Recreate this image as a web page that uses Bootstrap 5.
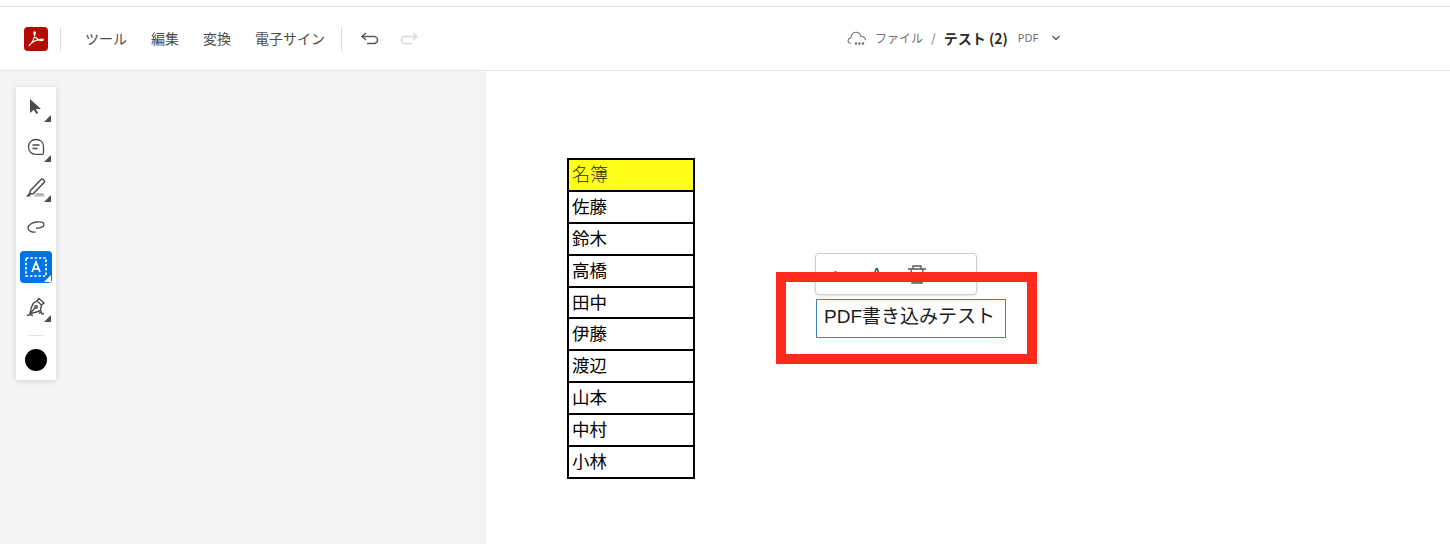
<!DOCTYPE html>
<html lang="ja">
<head>
<meta charset="utf-8">
<title>PDF</title>
<link rel="stylesheet" href="https://cdn.jsdelivr.net/npm/bootstrap@5.3.0/dist/css/bootstrap.min.css">
<style>
html,body{height:100%;overflow:hidden;background:#fff}
body{font-family:"Noto Sans CJK JP","Noto Sans",sans-serif;color:#2c2c2c}
.shell{height:544px;padding-top:6px}
.topbar{height:65px;border-top:1px solid #e3e3e3;border-bottom:1px solid #e8e8e8;background:#fff;padding-left:24px;position:relative}
.logo-box{width:24px;height:24px;border-radius:4px;background:#b30b00;flex:none}
.vsep{width:1px;height:24px;background:#dcdcdc;flex:none}
.vsep-first{margin-left:12px}
.menu-item{font-size:14px;line-height:20px;color:#4b4b4b;white-space:nowrap}
.menu-wrap{gap:24px;margin-left:24px;margin-right:16px;margin-bottom:2px}
.undo-wrap{gap:19px;margin-left:18px}
.crumb{position:absolute;left:847px;top:19px;height:24px;white-space:nowrap}
.crumb-light{font-size:12px;color:#6e6e6e}
.crumb-file{margin-left:8px}
.crumb-name{font-size:14px;font-weight:700;color:#2c2c2c;margin-left:8px}
.crumb-ext{font-size:11px;color:#6e6e6e;font-family:"Noto Sans",sans-serif;margin-left:10px}
.crumb-arrow{margin-left:13px}
.workarea{height:473px}
.side-pane{width:486px;background:#f4f4f4;flex:none;padding:16px 0 0 16px}
.tool-rail{width:40px;height:293px;background:#fff;box-shadow:0 1px 6px rgba(0,0,0,.14);padding-top:4px}
.tool-btn{width:32px;height:32px;margin:0 auto 8px;border-radius:4px;position:relative;display:flex;align-items:center;justify-content:center}
.tool-on{background:#0073e6}
.corner{position:absolute;right:1px;bottom:1px;width:0;height:0;border-left:7px solid transparent;border-bottom:7px solid #4b4b4b}
.tool-on .corner{border-bottom-color:#fff}
.rail-line{width:16px;height:1px;background:#e1e1e1;margin:12px auto 13px}
.black-dot{width:22px;height:22px;border-radius:50%;background:#000;margin:0 auto}
.doc-page{flex:1;background:#fff;position:relative}
.name-grid{position:absolute;left:81px;top:87px;width:128px;border:2px solid #000;background:#fff;font-family:"Liberation Sans","Noto Sans CJK JP",sans-serif;font-size:17.500px;color:#000}
.name-row{height:31.9px;line-height:30px;padding-left:3px;border-bottom:2px solid #000}
.name-row:last-child{border-bottom:0;height:30px}
.name-head{background:#ffff1a;color:#2a2a00;font-size:18px;font-weight:300}
.ink-pop{position:absolute;left:329px;top:182px;width:162px;height:42px;background:#fff;border:1px solid #cfcfcf;border-radius:4px;box-shadow:0 1px 2px rgba(0,0,0,.12)}
.ink-dot{position:absolute;left:18px;top:17px;width:3px;height:3px;background:#555;border-radius:50%}
.ink-a{position:absolute;left:55px;top:11px;font-size:17px;line-height:20px;color:#444;font-family:"Liberation Sans",sans-serif}
.ink-bin{position:absolute;left:91px;top:10px}
.text-field{position:absolute;left:330px;top:228px;width:190px;height:39px;border:1px solid #3a85c9;background:#fff;padding-left:7px;font-size:19px;line-height:33px;color:#1c1c1c;font-family:"Liberation Sans","Noto Sans CJK JP",sans-serif;white-space:nowrap}
.red-frame{position:absolute;left:290px;top:201px;width:261px;height:92px;border:10px solid #ff2a1c;pointer-events:none}
</style>
</head>
<body>
<div class="shell">
  <header class="topbar d-flex align-items-center">
    <div class="logo-box d-flex align-items-center justify-content-center">
      <svg width="20" height="20" viewBox="0 0 20 20" fill="none" stroke="#fff" stroke-width="1.200"><path d="M3 16.500C6 15 9 8 9.300 3.800c.1-1.300-1.500-1.300-1.400.2C8 8 12.500 12.300 16.500 11.500c1.300-.3 1-1.400-.4-1.400C12 10 6.500 12.500 3.600 15.800c-.8.900-.3 1.200-.6.700"/></svg>
    </div>
    <div class="vsep vsep-first"></div>
    <nav class="d-flex align-items-center menu-wrap">
      <span class="menu-item">ツール</span>
      <span class="menu-item">編集</span>
      <span class="menu-item">変換</span>
      <span class="menu-item">電子サイン</span>
    </nav>
    <div class="vsep"></div>
    <div class="d-flex align-items-center undo-wrap">
      <svg width="20" height="16" viewBox="0 0 20 16" fill="none" stroke="#5a5a5a" stroke-width="1.500"><path d="M6 2 2 5.500 6 9"/><path d="M2 5.500h12a3.500 3.500 0 0 1 0 7H7"/></svg>
      <svg width="20" height="16" viewBox="0 0 20 16" fill="none" stroke="#d8d8d8" stroke-width="1.500"><path d="M14 2l4 3.500L14 9"/><path d="M18 5.500H6a3.500 3.500 0 0 0 0 7h7"/></svg>
    </div>
    <div class="crumb d-flex align-items-center">
      <svg width="20" height="16" viewBox="0 0 20 16" fill="none" stroke="#6e6e6e" stroke-width="1.100"><path d="M4 13.500C1.500 13.500.8 11.500 1.200 10c.3-1.300 1.500-2 2.600-2C4.500 4 7 2 9.500 2.300 12 2.600 13.500 4.500 14 6.500c2.500 0 4.500 1.500 4.500 3.800"/><circle cx="9" cy="13.500" r=".7" fill="#6e6e6e"/><circle cx="12.500" cy="13.500" r=".7" fill="#6e6e6e"/><circle cx="16" cy="13.500" r=".7" fill="#6e6e6e"/></svg>
      <span class="crumb-light crumb-file">ファイル</span>
      <span class="crumb-light ms-2">/</span>
      <span class="crumb-name">テスト (2)</span>
      <span class="crumb-ext">PDF</span>
      <svg class="crumb-arrow" width="10" height="8" viewBox="0 0 10 8" fill="none" stroke="#5a5a5a" stroke-width="1.400"><path d="M1.500 2 5 5.500 8.500 2"/></svg>
    </div>
  </header>
  <main class="workarea d-flex">
    <aside class="side-pane">
      <div class="tool-rail">
        <div class="tool-btn">
          <svg width="18" height="18" viewBox="0 0 18 18"><path d="M3 1v14l3.800-3.200 2.600 4.200 1.800-1-2.400-4H14z" fill="#4b4b4b"/></svg><span class="corner"></span>
        </div>
        <div class="tool-btn">
          <svg width="20" height="20" viewBox="0 0 20 20" fill="none" stroke="#4b4b4b" stroke-width="1.300"><path d="M10 2.500c4.500 0 7.500 2.800 7.500 7v6.500c0 .8-.5 1.300-1.300 1.300H10c-4.500 0-7.500-3-7.500-7.300S5.500 2.500 10 2.500z"/><path d="M6.500 8h7M6.500 11.500h5" stroke-width="1.500"/></svg><span class="corner"></span>
        </div>
        <div class="tool-btn">
          <svg width="24" height="22" viewBox="0 0 24 22" fill="none" stroke="#4b4b4b" stroke-width="1.500"><path d="M6.500 14.500 17 3.500c.7-.7 1.500-.7 2.200 0l.8.800c.7.700.7 1.500 0 2.200L9.500 17.500l-4 .5z"/><path d="M9 20.500h12l-2-3.500h-6z" fill="#b5b5b5" stroke="none"/><path d="M2 20.500 4.500 17.500l2.500 3z" fill="#4b4b4b" stroke="none"/></svg><span class="corner"></span>
        </div>
        <div class="tool-btn">
          <svg width="20" height="14" viewBox="0 0 20 14" fill="none" stroke="#4b4b4b" stroke-width="1.300"><path d="M10 8c3.500.5 8-.8 8-3.500C18 2 14.500 1.500 10.500 2 6 2.700 2 5 2 8c0 3 4 4.500 7.500 4"/></svg>
        </div>
        <div class="tool-btn tool-on">
          <svg width="24" height="22" viewBox="0 0 24 22" fill="none" stroke="#fff"><rect x="2" y="2" width="20" height="18" stroke-width="1.700" stroke-dasharray="2.500 1.800"/><path d="M8 16 12 6l4 10M9.500 13h5" stroke-width="1.700"/></svg><span class="corner"></span>
        </div>
        <div class="tool-btn">
          <svg width="24" height="22" viewBox="0 0 24 22" fill="none" stroke="#4b4b4b" stroke-width="1.400"><path d="M15 2.500 20 7l-2.500 2-1 5.500c-3 1.500-7 2.500-10.500 3 .5-3.500 1.500-7.500 3.500-10.500L13 5z"/><path d="M13 5l4.500 4"/><path d="M6 17.500 11 12"/><circle cx="12" cy="11" r="1.300"/><path d="M3 19.500c2-1 4-1 6 0M15 17.500l2-1.500 1 2 2-.5" stroke-width="1.500"/></svg><span class="corner"></span>
        </div>
        <div class="rail-line"></div>
        <div class="black-dot"></div>
      </div>
    </aside>
    <section class="doc-page">
      <div class="name-grid">
        <div class="name-row name-head">名簿</div>
        <div class="name-row">佐藤</div>
        <div class="name-row">鈴木</div>
        <div class="name-row">高橋</div>
        <div class="name-row">田中</div>
        <div class="name-row">伊藤</div>
        <div class="name-row">渡辺</div>
        <div class="name-row">山本</div>
        <div class="name-row">中村</div>
        <div class="name-row">小林</div>
      </div>
      <div class="ink-pop">
        <span class="ink-dot"></span>
        <span class="ink-a">A</span>
        <svg class="ink-bin" width="20" height="20" viewBox="0 0 20 20" fill="none" stroke="#555" stroke-width="1.300"><path d="M1 5h18M6 5V2h8v3M4 5l1 14h10l1-14M8 8v8M12 8v8"/></svg>
      </div>
      <div class="text-field">PDF書き込みテスト</div>
      <div class="red-frame"></div>
    </section>
  </main>
</div>
</body>
</html>
